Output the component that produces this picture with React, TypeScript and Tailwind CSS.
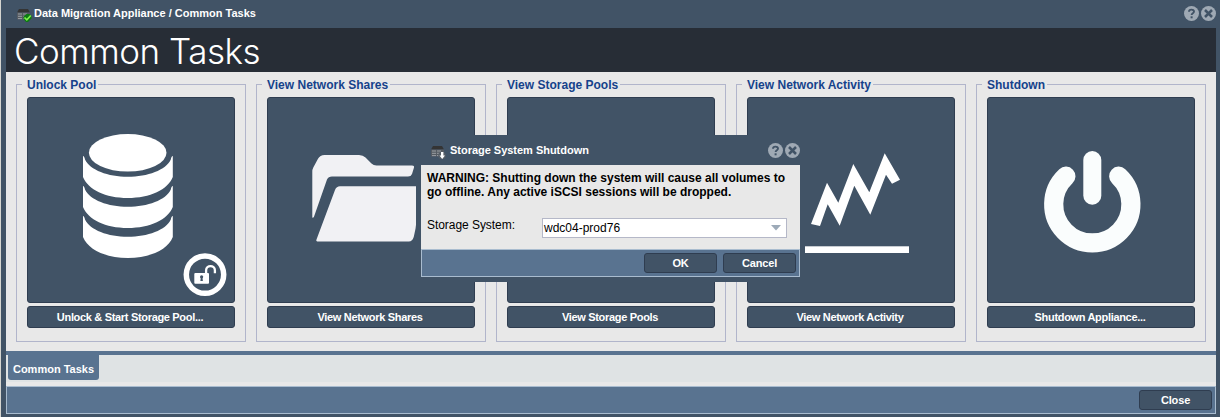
import type { ReactNode } from "react";

function ServerIcon({ badge }: { badge: "check" | "down" }) {
  return (
    <svg width="16" height="16" viewBox="0 0 16 16" className="shrink-0">
      <path d="M3 2h9l2 3.500H1z" fill="#343434" />
      <path d="M1 5.500h13v7H1z" fill="#555b62" />
      <path d="M2 7h4M7 7h4M2 9.300h4M7 9.300h4M2 11.600h4M7 11.600h4" stroke="#a3a7ab" strokeWidth="0.900" />
      {badge === "check" ? (
        <>
          <path d="M7.500 9.500 10.500 7h3l2 2v2.500L12 15h-2l-2.500-3z" fill="#0c7a12" />
          <path d="m8.500 10.500 2.300 2.300 4-4.300" fill="none" stroke="#7df04c" strokeWidth="1.700" />
        </>
      ) : (
        <>
          <circle cx="12" cy="11.500" r="3.800" fill="#555d66" />
          <path d="M11 8h2.400v3.500H15L12.200 15 9.500 11.500H11z" fill="#fff" />
        </>
      )}
    </svg>
  );
}

function WindowTools() {
  return (
    <div className="flex gap-[2px]">
      <svg width="15" height="15" viewBox="0 0 15 15">
        <circle cx="7.500" cy="7.500" r="7.500" fill="#9fa9b4" />
        <path d="M5 5.700C5 3 10 2.900 10 5.600c0 1.700-2.400 1.600-2.400 3.500" fill="none" stroke="#415366" strokeWidth="1.900" />
        <rect x="6.600" y="10.300" width="2" height="2" fill="#415366" />
      </svg>
      <svg width="15" height="15" viewBox="0 0 15 15">
        <circle cx="7.500" cy="7.500" r="7.500" fill="#9fa9b4" />
        <path d="m4 4 7 7M11 4l-7 7" stroke="#415366" strokeWidth="2.500" />
      </svg>
    </div>
  );
}

function PushButton({ children }: { children: ReactNode }) {
  return (
    <button className="h-5 w-[73px] rounded-[3px] border border-[#2f3d50] bg-[#415366] text-center text-[11px] leading-[18px] font-bold tracking-[-0.150px] text-white">
      {children}
    </button>
  );
}

function DatabaseArt() {
  return (
    <svg viewBox="28 98 206 204" className="block h-full w-full" fill="#fff">
      <ellipse cx="127.700" cy="152.800" rx="38.800" ry="18.800" />
      {[0, 30, 60].map((dy) => (
        <path
          key={dy}
          transform={`translate(0 ${dy})`}
          d="M83 156q1.300 0 2 3.500C90 170 108 176.800 127.800 176.800S166 170 170.800 159.500q.6-3.500 2-3.500v21C168 189.500 150 198 127.800 198S88 189.500 83 177z"
        />
      ))}
      <circle cx="205" cy="274.600" r="18.700" fill="none" stroke="#fff" strokeWidth="5.500" />
      <rect x="194.300" y="273" width="14.700" height="10.800" rx="1" />
      <path d="M206.100 273.500v-3.200c0-5.500 8.800-5.500 8.800 0v2.900" fill="none" stroke="#fff" strokeWidth="2.300" />
      <circle cx="201.600" cy="276.800" r="1.600" fill="#415366" />
      <path d="M200.900 277h1.500l.5 4h-2.500z" fill="#415366" />
    </svg>
  );
}

function FolderArt() {
  return (
    <svg viewBox="268 98 206 204" className="block h-full w-full" fill="#f1f1f4">
      <path d="M312.300 217.800V171.500q0-2 1-4l4.700-8.700q2-3.800 6.500-3.800H359q4 0 6.500 2.500l6 6q2 1.900 5 1.900h35.500q2.500 0 2 2l-2 6.500q-1 2.700-4 2.700h-76q-3.700 0-5 3L313.800 217.300z" />
      <path d="M316.500 239.500 335 190q1.500-3.700 5-3.700h78q3.500 0 2.500 3.500l-5 39-1.700 8q-1.300 4.800-5 4.800h-90.300q-3 0-2-2.100z" />
    </svg>
  );
}

function ChartArt() {
  return (
    <svg viewBox="748 98 206 204" className="block h-full w-full" fill="#fff">
      <path d="M811 224 827 182.700 838.300 202.700 853.300 164 869.300 192.300 884.700 153.300 900 179.700 892 183.700 886 174.700 870.300 214.700 854.300 185.700 839.700 225.700 827.700 204.300 820 226z" />
      <rect x="805" y="246.300" width="104" height="6.700" />
    </svg>
  );
}

function PowerArt() {
  return (
    <svg viewBox="988 98 206 204" className="block h-full w-full" fill="none" stroke="#fafdfd" strokeLinecap="round">
      <path d="M1065.900 176.200a38.600 38.600 0 1 0 52.800 0" strokeWidth="19.200" />
      <path d="M1092.300 160v35.700" strokeWidth="18" />
    </svg>
  );
}

type Task = { title: string; action: string; art: ReactNode };

const tasks: Task[] = [
  { title: "Unlock Pool", action: "Unlock & Start Storage Pool...", art: <DatabaseArt /> },
  { title: "View Network Shares", action: "View Network Shares", art: <FolderArt /> },
  { title: "View Storage Pools", action: "View Storage Pools", art: null },
  { title: "View Network Activity", action: "View Network Activity", art: <ChartArt /> },
  { title: "Shutdown", action: "Shutdown Appliance...", art: <PowerArt /> },
];

function TaskPanel({ title, action, art }: Task) {
  return (
    <section className="flex h-[265px] w-[230px] flex-col">
      <div className="flex h-[14px] items-center">
        <span className="h-[7px] w-[6px] self-end border-t border-l border-[#b1b5cb]" />
        <h2 className="px-[5px] pt-[2px] pr-[2px] text-[12px] leading-[14px] font-bold whitespace-nowrap text-[#15428b]">
          {title}
        </h2>
        <span className="h-[7px] flex-1 self-end border-t border-r border-[#b1b5cb]" />
      </div>
      <div className="flex flex-1 flex-col gap-[3px] border border-t-0 border-[#b1b5cb] px-[10px] pt-[6px]">
        <button className="h-[206px] w-[208px] rounded-[3px] border border-[#2f3d50] bg-[#415366]">{art}</button>
        <button className="h-[22px] w-[208px] rounded-[3px] border border-[#2f3d50] bg-[#415366] pr-[2px] text-[11px] leading-[20px] font-bold tracking-[-0.320px] text-white">
          {action}
        </button>
      </div>
    </section>
  );
}

function ShutdownDialog() {
  return (
    <div
      role="dialog"
      className="absolute top-[135px] left-[415px] flex h-[147px] w-[389px] flex-col bg-[#415366] px-[5px] pb-[5px]"
    >
      <div className="flex h-[30px] shrink-0 items-center pl-[9px]">
        <div className="pt-[3px]">
          <ServerIcon badge="down" />
        </div>
        <span className="flex-1 pl-[4px] text-[11px] font-bold tracking-[-0.020px] text-white">Storage System Shutdown</span>
        <WindowTools />
      </div>
      <div className="h-[84px] bg-[#e8e8e8] px-[6px] pt-[6px] text-[12px] text-black">
        <p className="leading-[14px] font-bold whitespace-nowrap">
          WARNING: Shutting down the system will cause all volumes to
          <br />
          go offline. Any active iSCSI sessions will be dropped.
        </p>
        <div className="flex pt-[19px]">
          <label className="w-[115px] leading-[14px] tracking-[-0.050px]">Storage System:</label>
          <div className="flex h-5 w-[245px] items-center justify-between border border-[#b5b8c8] bg-white pr-[4px] pl-px">
            <span>wdc04-prod76</span>
            <svg width="12" height="6" viewBox="0 0 12 6">
              <path d="M1 0h10L6 5.500z" fill="#9daab8" />
            </svg>
          </div>
        </div>
      </div>
      <div className="flex h-[28px] items-start justify-end gap-[6px] border border-[#a9bccf] bg-[#597390] pt-[3px] pr-[3px]">
        <PushButton>OK</PushButton>
        <PushButton>Cancel</PushButton>
      </div>
    </div>
  );
}

export default function App() {
  return (
    <div className="relative flex h-[417px] w-[1220px] flex-col overflow-hidden border-l border-[#d5d5d0] bg-[#415366] pr-[4px] pl-[5px] font-['Liberation_Sans',Arial,sans-serif]">
      <header className="flex h-[28px] shrink-0 items-center pb-px pl-[10px]">
        <div className="pt-[2px]">
          <ServerIcon badge="check" />
        </div>
        <span className="flex-1 pl-[2px] text-[11px] font-bold text-white">Data Migration Appliance / Common Tasks</span>
        <WindowTools />
      </header>
      <h1 className="h-[44px] shrink-0 bg-[#272d36] pl-[8px] font-[Inter] text-[35px] leading-[46px] font-light tracking-[-0.500px] text-white">
        Common Tasks
      </h1>
      <main className="flex h-[279px] shrink-0 gap-[10px] bg-[#e8e8e8] pt-[5px] pl-[10px]">
        {tasks.map((t) => (
          <TaskPanel key={t.title} {...t} />
        ))}
      </main>
      <nav className="h-[31px] shrink-0 border-t-4 border-[#597390] bg-[#dfe3e4] pl-[2px]">
        <div className="h-[25px] w-[91px] rounded-b-[3px] bg-[#597390] text-center text-[11px] leading-[28px] font-bold text-white">
          Common Tasks
        </div>
      </nav>
      <div className="shrink-0 bg-[#e8e8e8] pt-[4px]">
        <footer className="flex h-[28px] items-start justify-end border border-[#a9bccf] bg-[#597390] pt-[3px] pr-[3px]">
          <PushButton>Close</PushButton>
        </footer>
      </div>
      <ShutdownDialog />
    </div>
  );
}
